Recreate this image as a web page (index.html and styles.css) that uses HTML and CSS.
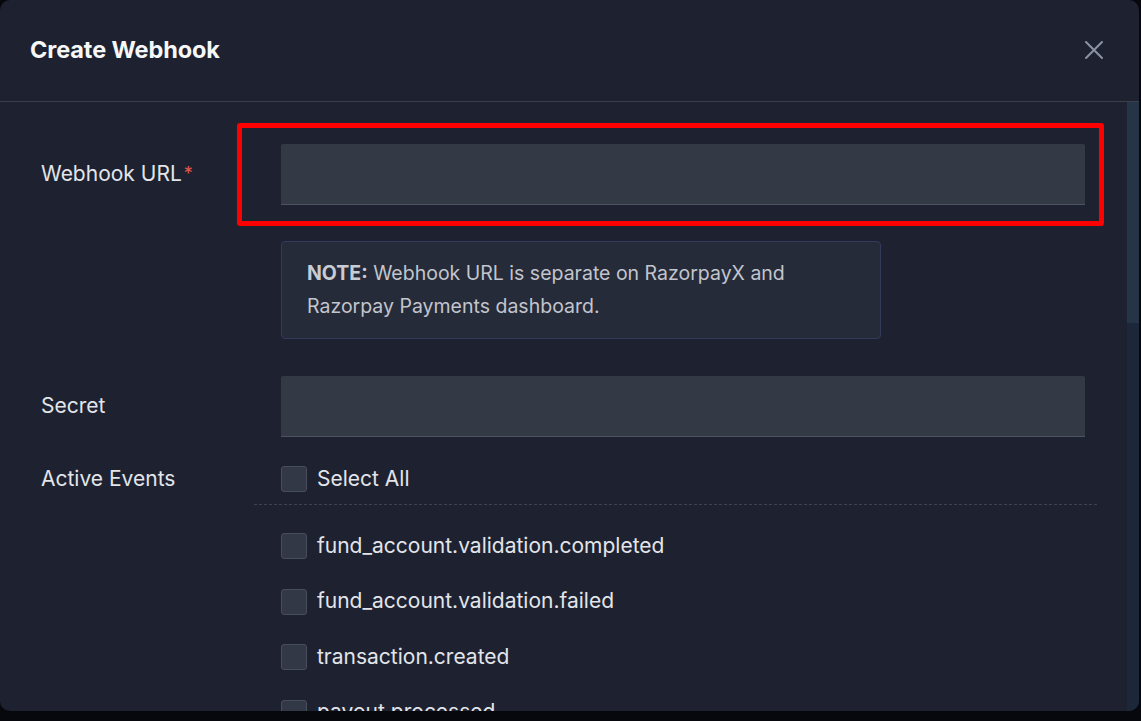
FILE: index.html
```html
<!DOCTYPE html>
<html>
<head>
<meta charset="utf-8">
<link rel="stylesheet" href="styles.css">
</head>
<body>
<div class="modal">
  <div class="modal-header">
    <h1 class="title">Create Webhook</h1>
    <button class="close" aria-label="Close">
      <svg width="20" height="20" viewBox="0 0 20 20"><path d="M2 2 L18 18 M18 2 L2 18" stroke="#8a93a5" stroke-width="2" stroke-linecap="round"/></svg>
    </button>
  </div>
  <div class="modal-body">
    <div class="row">
      <label class="label">Webhook URL<span class="req">*</span></label>
      <div class="field">
        <div class="highlight-wrap">
          <input class="input" type="text">
          <div class="highlight"></div>
        </div>
        <div class="note"><b>NOTE:</b> Webhook URL is separate on RazorpayX and<br>Razorpay Payments dashboard.</div>
      </div>
    </div>
    <div class="row secret-row">
      <label class="label">Secret</label>
      <div class="field"><input class="input" type="text"></div>
    </div>
    <div class="row events-row">
      <label class="label">Active Events</label>
      <div class="field">
        <div class="check select-all"><span class="box"></span><span>Select All</span></div>
        <div class="dashed"></div>
        <div class="events">
          <div class="check"><span class="box"></span><span>fund_account.validation.completed</span></div>
          <div class="check"><span class="box"></span><span>fund_account.validation.failed</span></div>
          <div class="check"><span class="box"></span><span>transaction.created</span></div>
          <div class="check"><span class="box"></span><span>payout.processed</span></div>
          <div class="check"><span class="box"></span><span>payout.reversed</span></div>
          <div class="check"><span class="box"></span><span>payout.initiated</span></div>
          <div class="check"><span class="box"></span><span>payout.updated</span></div>
          <div class="check"><span class="box"></span><span>payout.rejected</span></div>
          <div class="check"><span class="box"></span><span>payout.pending</span></div>
          <div class="check"><span class="box"></span><span>payout.queued</span></div>
          <div class="check"><span class="box"></span><span>payout.failed</span></div>
          <div class="check"><span class="box"></span><span>payout.created</span></div>
          <div class="check"><span class="box"></span><span>payout_link.issued</span></div>
          <div class="check"><span class="box"></span><span>payout_link.processing</span></div>
          <div class="check"><span class="box"></span><span>payout_link.processed</span></div>
          <div class="check"><span class="box"></span><span>payout_link.attempted</span></div>
          <div class="check"><span class="box"></span><span>payout_link.cancelled</span></div>
          <div class="check"><span class="box"></span><span>payout_link.rejected</span></div>
          <div class="check"><span class="box"></span><span>payout_link.expired</span></div>
          <div class="check"><span class="box"></span><span>payout_link.pending</span></div>
        </div>
      </div>
    </div>
  </div>
  <div class="scrollbar"><div class="thumb"></div></div>
</div>
</body>
</html>
```

FILE: styles.css
```css
html, body {
  margin: 0;
  padding: 0;
  background: #06080d;
  font-family: Inter, "Noto Sans", sans-serif;
}
.modal {
  position: relative;
  width: 1139px;
  height: 711px;
  background: #1e2230;
  border-radius: 10px;
  overflow: hidden;
  display: flex;
  flex-direction: column;
}
.modal-header {
  height: 102px;
  border-bottom: 1px solid #3a3f4b;
  box-sizing: border-box;
  flex: none;
  display: flex;
  align-items: center;
  justify-content: space-between;
  padding: 0 35px 2px 30px;
}
.title {
  margin: 0;
  font-size: 23.5px;
  font-weight: 700;
  color: #f6f7f9;
  letter-spacing: -0.1px;
}
.close {
  background: none;
  border: 0;
  padding: 0;
  width: 20px;
  height: 20px;
  display: flex;
}
.modal-body {
  flex: 1;
  overflow-y: scroll;
  padding: 42px 30px 40px 41px;
}
.modal-body::-webkit-scrollbar { width: 12px; background: #1c2839; }
.modal-body::-webkit-scrollbar-track { background: #1c2839; }
.modal-body::-webkit-scrollbar-thumb { background: #283649; }
.scrollbar {
  position: absolute;
  right: 0;
  top: 102px;
  bottom: 0;
  width: 12px;
  background: #1c2839;
}
.thumb {
  height: 221px;
  background: #263447;
}
.row {
  display: flex;
}
.label {
  width: 240px;
  flex: none;
  font-size: 21px;
  color: #e3e5ea;
  height: 61px;
  box-sizing: border-box;
  padding-bottom: 2px;
  display: flex;
  align-items: center;
}
.req { color: #e0594d; font-size: 18px; margin-left: 2px; align-self: flex-start; margin-top: 19px; }
.field {
  width: 804px;
  flex: none;
}
.highlight-wrap { position: relative; }
.highlight {
  position: absolute;
  left: -44px;
  top: -21px;
  width: 867px;
  height: 103px;
  box-sizing: border-box;
  border: 5px solid #ff0000;
  border-radius: 3px;
  pointer-events: none;
}
.input {
  display: block;
  width: 100%;
  height: 61px;
  box-sizing: border-box;
  background: #343946;
  border: 0;
  border-bottom: 1px solid #4c5262;
  border-radius: 2px 2px 0 0;
  margin: 0;
  outline: none;
}
.note {
  margin-top: 36px;
  width: 600px;
  box-sizing: border-box;
  background: #262b39;
  border: 1px solid #343a5a;
  border-radius: 4px;
  padding: 15px 25px;
  font-size: 19.5px;
  line-height: 33px;
  color: #c2c5cd;
}
.note b { color: #c8cbd2; }
.secret-row { margin-top: 37px; }
.events-row { margin-top: 29px; }
.events-row .label { height: 24px; padding-bottom: 0; }
.check {
  display: flex;
  align-items: center;
  gap: 10px;
  font-size: 21px;
  color: #e3e5ea;
  height: 26px;
}
.check span:last-child { margin-top: -2px; }
.box {
  width: 26px;
  height: 26px;
  box-sizing: border-box;
  background: #333846;
  border: 1px solid #474d5b;
  border-radius: 3px;
  flex: none;
}
.dashed {
  margin: 12px -12px 0 -27px;
  border-top: 1px dashed #3c4252;
}
.events {
  margin-top: 28px;
  display: flex;
  flex-direction: column;
  gap: 29.5px;
}
```
